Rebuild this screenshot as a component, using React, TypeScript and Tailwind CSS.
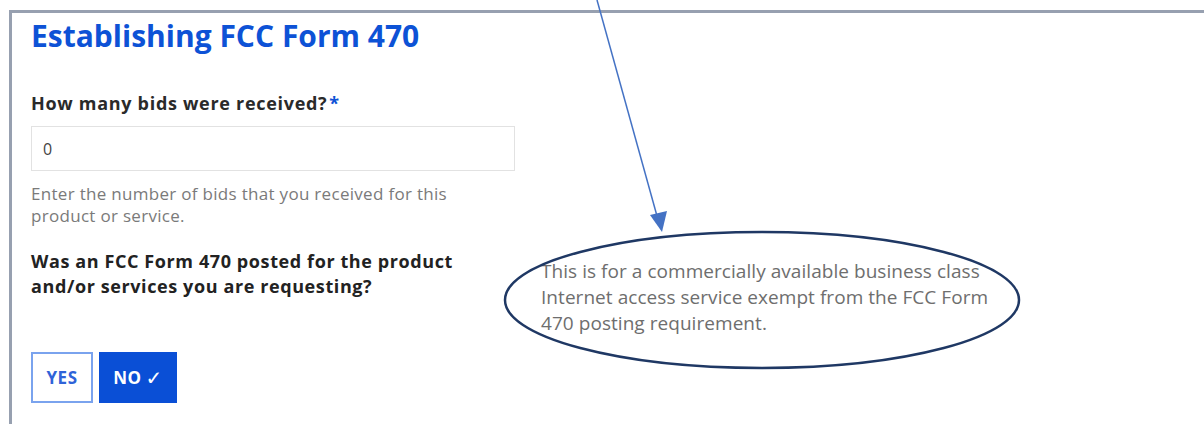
// Annotation layer: callout arrow and the ellipse around the note text
function Callout() {
  return (
    <svg className="pointer-events-none absolute left-0 top-0" width={1204} height={424} viewBox="0 0 1204 424">
      <line x1={597} y1={0} x2={657} y2={216} stroke="#4472c4" strokeWidth={1.5} />
      <polygon points="650,215 667,211 662,232" fill="#4472c4" />
      <ellipse cx={762} cy={300} rx={257} ry={68} fill="none" stroke="#1f3864" strokeWidth={2.5} />
    </svg>
  );
}

export default function App() {
  return (
    <div className="relative h-[424px] w-[1204px] overflow-hidden bg-white font-['Open_Sans',sans-serif]">
      <div className="ml-[9px] mt-[10px] h-[414px] border-l-[3px] border-t-[3px] border-[#97a0b0] pl-[19px] pt-[5px]">
        <h1 className="text-[30px] font-bold leading-[36px] text-[#0d52d6]">Establishing FCC Form 470</h1>

        <label className="mt-[37px] block text-[18px] font-bold leading-[24px] tracking-[0.7px] text-[#2a2a2a]">
          How many bids were received?<span className="ml-[2px] text-[#0d52d6]">*</span>
        </label>
        <div className="mt-[11px] flex h-[45px] w-[484px] items-center border border-[#e2e2e2] pl-[11px] text-[16px] text-[#444]">
          0
        </div>
        <p className="mt-[12px] w-[440px] text-[17px] leading-[22px] tracking-[0.3px] text-[#7a7a7a]">
          Enter the number of bids that you received for this product or service.
        </p>

        <div className="mt-[22px] flex">
          <div className="w-[510px] shrink-0">
            <p className="w-[470px] text-[18px] font-bold leading-[25px] tracking-[0.6px] text-[#222]">
              Was an FCC Form 470 posted for the product and/or services you are requesting?
            </p>
            <div className="mt-[53px] flex gap-[6px]">
              <button className="h-[51px] w-[62px] border-2 border-[#7aa3ee] text-[17px] font-bold tracking-[0.5px] text-[#2f63d8]">
                YES
              </button>
              <button className="flex h-[51px] w-[78px] items-center justify-center gap-[4px] bg-[#0a4fd6] text-[17px] font-bold tracking-[0.5px] text-white">
                NO<span className="font-['DejaVu_Sans',sans-serif] text-[20px] font-bold leading-none">✓</span>
              </button>
            </div>
          </div>
          <p className="mt-[9px] w-[460px] text-[19px] leading-[26px] tracking-[0.05px] text-[#6e6e6e]">
            This is for a commercially available business class Internet access service exempt from the FCC Form
            470 posting requirement.
          </p>
        </div>
      </div>
      <Callout />
    </div>
  );
}
